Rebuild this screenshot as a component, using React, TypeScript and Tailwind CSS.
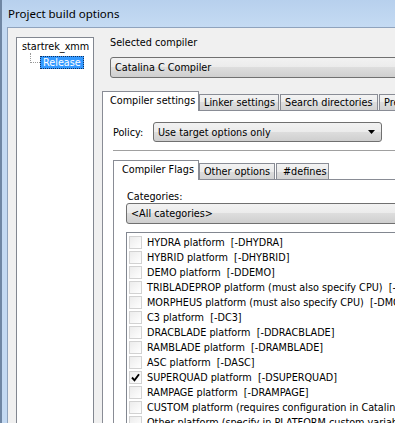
import React from "react";

const UI = "font-['DejaVu_Sans_Condensed','Liberation_Sans',sans-serif] text-[10.75px] text-black leading-[13px]";
const COMBO =
    "border border-[#707070] rounded-[3px] bg-[linear-gradient(to_bottom,#f2f2f2_0%,#ebebeb_50%,#dddddd_50%,#cfcfcf_100%)]";
const TAB_OFF =
    "h-[16px] border border-b-0 border-[#898c95] bg-[linear-gradient(to_bottom,#f3f3f3_0%,#ebebeb_50%,#dddddd_50%,#d3d3d3_100%)]";
const TAB_ON = "h-[20px] -mb-px relative z-10 border border-b-0 border-[#898c95] bg-white pb-[2px]";

const platforms = [
    "HYDRA platform  [-DHYDRA]",
    "HYBRID platform  [-DHYBRID]",
    "DEMO platform  [-DDEMO]",
    "TRIBLADEPROP platform (must also specify CPU)  [-DTRIBLADEPROP]",
    "MORPHEUS platform (must also specify CPU)  [-DMORPHEUS]",
    "C3 platform  [-DC3]",
    "DRACBLADE platform  [-DDRACBLADE]",
    "RAMBLADE platform  [-DRAMBLADE]",
    "ASC platform  [-DASC]",
    "SUPERQUAD platform  [-DSUPERQUAD]",
    "RAMPAGE platform  [-DRAMPAGE]",
    "CUSTOM platform (requires configuration in Catalina_platforms.inc)  [-DCUSTOM]",
    "Other platform (specify in PLATFORM custom variable)",
];

const Tab: React.FC<{ label: string; active?: boolean; className: string }> = ({ label, active, className }) => (
    <div className={`${active ? TAB_ON : TAB_OFF} ${className} shrink-0 flex items-center whitespace-nowrap overflow-hidden`}>
        {label}
    </div>
);

const App: React.FC = () => {
    return (
        <div className={`w-[395px] h-[423px] overflow-hidden flex flex-col bg-[#c3d9f2] border-l-2 border-[#6f86a3] ${UI}`}>
            {/* Title bar */}
            <div className="h-[27px] shrink-0 flex items-center pl-[6px] bg-gradient-to-b from-[#b7d0ed] to-[#c5dbf3] font-['Noto_Sans',sans-serif] text-[11.5px]">
                Project build options
            </div>

            {/* Dialog body */}
            <div className="flex-1 min-h-0 ml-[5px] flex border-l border-t border-[#8fa3bd] bg-[#f0f0f0]">
                {/* Target tree */}
                <div className="w-[78px] shrink-0 ml-[8px] mt-[9px] h-[500px] border border-[#828790] bg-white pt-[2px]">
                    <div className="h-[13px] pl-[5px] whitespace-nowrap">startrek_xmm</div>
                    <div className="flex items-start">
                        <div className="ml-[13px] w-[10px] h-[10px] border-l border-b border-dotted border-[#9a9a9a]" />
                        <div className="mt-[3px] h-[13px] px-[2px] flex items-center bg-[#3399ff] text-white border border-dotted border-[#13315c]">
                            Release
                        </div>
                    </div>
                </div>

                {/* Right side */}
                <div className="w-[420px] shrink-0 ml-[8px] flex flex-col">
                    <div className="pl-[8px] pt-[8px]">
                        <div className="h-[14px] whitespace-nowrap">Selected compiler</div>
                        <div className={`mt-[7px] h-[21px] w-[360px] ${COMBO} flex items-center pl-[4px] whitespace-nowrap`}>
                            Catalina C Compiler
                        </div>
                    </div>

                    {/* Outer notebook */}
                    <div className="mt-[13px] flex items-end h-[19px]">
                        <Tab label="Compiler settings" active className="w-[97px] pl-[7px]" />
                        <Tab label="Linker settings" className="w-[80px] pl-[4px]" />
                        <Tab label="Search directories" className="ml-px w-[98px] pl-[4px]" />
                        <Tab label="Pre/post build steps" className="ml-px w-[110px] pl-[4px]" />
                    </div>
                    <div className="flex-1 border-l border-t border-[#898c95] bg-white flex flex-col">
                        <div className="mt-[11px] pl-[10px] flex items-center">
                            <span className="w-[40px]">Policy:</span>
                            <div className={`w-[229px] h-[20px] ${COMBO} flex items-center justify-between pl-[4px] pr-[6px] whitespace-nowrap`}>
                                Use target options only
                                <svg width="7" height="4" viewBox="0 0 7 4">
                                    <path d="M0 0h7L3.5 4z" fill="#000" />
                                </svg>
                            </div>
                        </div>
                        <div className="mt-[8px] ml-[10px] h-px bg-[#a0a0a0]" />

                        {/* Inner notebook */}
                        <div className="ml-[10px] mt-[9px] flex items-end h-[19px]">
                            <Tab label="Compiler Flags" active className="w-[86px] pl-[8px]" />
                            <Tab label="Other options" className="w-[76px] pl-[4px]" />
                            <Tab label="#defines" className="ml-px w-[53px] pl-[6px]" />
                        </div>
                        <div className="ml-[10px] flex-1 border-l border-t border-[#898c95] bg-white pl-[12px] pt-[10px]">
                            <div className="h-[13px] pl-px">Categories:</div>
                            <div className={`h-[21px] ${COMBO} flex items-center pl-[4px]`}>
                                &lt;All categories&gt;
                            </div>
                            <div className="mt-[8px] h-[300px] border-l border-t border-[#828790] bg-white pt-[2px] pl-[2px]">
                                {platforms.map((p, i) => (
                                    <div key={p} className="h-[15px] flex items-center whitespace-nowrap">
                                        <div className="w-[13px] h-[13px] shrink-0 border border-[#d2d2d2] bg-gradient-to-br from-[#ececec] to-white flex items-center justify-center">
                                            {i === 9 && (
                                                <svg width="9" height="9" viewBox="0 0 9 9">
                                                    <path d="M1 4.5 L3.5 7.3 L8 1.2" fill="none" stroke="#000" strokeWidth="1.9" />
                                                </svg>
                                            )}
                                        </div>
                                        <span className="ml-[5px] whitespace-pre">{p}</span>
                                    </div>
                                ))}
                            </div>
                        </div>
                    </div>
                </div>
            </div>
        </div>
    );
};

export default App;
